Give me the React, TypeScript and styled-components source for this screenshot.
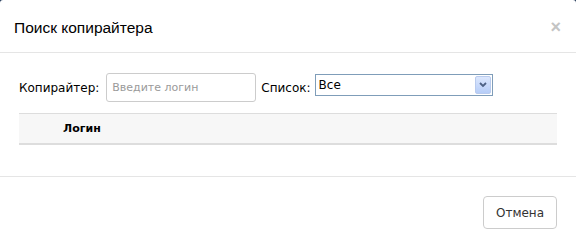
import React from "react";
import styled, { createGlobalStyle } from "styled-components";

const Global = createGlobalStyle`
  html, body { margin: 0; padding: 0; background: #1f3556; }
  body { font-family: "DejaVu Sans", Verdana, sans-serif; }
  * { box-sizing: border-box; }
`;

const Modal = styled.div`
  width: 576px;
  height: 248px;
  background: #fff;
  border-radius: 3px 3px 0 0;
  display: flex;
  flex-direction: column;
  overflow: hidden;
`;

const Header = styled.div`
  height: 53px;
  border-bottom: 1px solid #e5e5e5;
  display: flex;
  align-items: center;
  justify-content: space-between;
  padding: 0 15px 0 14px;
`;

const Title = styled.h4`
  margin: 0;
  font-family: "Liberation Sans", Arial, sans-serif;
  font-size: 15.5px;
  font-weight: normal;
  color: #000;
  line-height: 20px;
  margin-top: 3px;
`;

const Close = styled.span`
  font-family: "Liberation Sans", Arial, sans-serif;
  font-size: 18px;
  font-weight: bold;
  color: #c4c4c4;
  line-height: 1;
  margin-top: 2px;
`;

const Body = styled.div`
  height: 124px;
  border-bottom: 1px solid #e5e5e5;
  padding: 20px 19px 0 19px;
`;

const FilterRow = styled.div`
  display: flex;
  align-items: center;
  height: 29px;
  color: #000;
`;

const Label = styled.label<{ $gap: number }>`
  margin-right: ${(p) => p.$gap}px;
  font-size: 12px;
`;

const Input = styled.input`
  width: 150px;
  height: 29px;
  border: 1px solid #cccccc;
  border-radius: 3px;
  padding: 0 5px;
  font-family: "DejaVu Sans", Verdana, sans-serif;
  font-size: 11px;
  margin-right: 5px;
  &::placeholder { color: #9a9a9a; }
`;

const Select = styled.div`
  width: 178px;
  height: 22px;
  margin-bottom: 5px;
  border: 1px solid #7f9db9;
  display: flex;
  align-items: center;
  justify-content: space-between;
  padding: 1px 1px 1px 3px;
  font-size: 12px;
`;

const Arrow = styled.div`
  width: 16px;
  height: 18px;
  border: 1px solid #b9cbee;
  border-radius: 2px;
  background: linear-gradient(#dce7fd, #b6cdf8);
  display: flex;
  align-items: center;
  justify-content: center;
`;

const Table = styled.div`
  margin-top: 11px;
  height: 32px;
  background: #f7f7f7;
  border-top: 1px solid #dddddd;
  border-bottom: 2px solid #dddddd;
  display: flex;
  align-items: center;
  padding-left: 44px;
`;

const Th = styled.span`
  font-weight: bold;
  font-size: 11px;
  color: #000;
`;

const Footer = styled.div`
  flex: 1;
  display: flex;
  justify-content: flex-end;
  padding: 19px 19px 0 0;
`;

const Button = styled.button`
  width: 74px;
  height: 33px;
  background: #fff;
  border: 1px solid #cccccc;
  border-radius: 4px;
  font-family: "DejaVu Sans", Verdana, sans-serif;
  font-size: 12px;
  color: #333;
`;

export default function App() {
  return (
    <>
      <Global />
      <Modal>
        <Header>
          <Title>Поиск копирайтера</Title>
          <Close>×</Close>
        </Header>
        <Body>
          <FilterRow>
            <Label $gap={7}>Копирайтер:</Label>
            <Input placeholder="Введите логин" />
            <Label $gap={4}>Список:</Label>
            <Select>
              <span>Все</span>
              <Arrow>
                <svg width="8" height="6" viewBox="0 0 8 6">
                  <path d="M1 1 L4 4 L7 1" stroke="#4d6185" strokeWidth="1.8" fill="none" />
                </svg>
              </Arrow>
            </Select>
          </FilterRow>
          <Table>
            <Th>Логин</Th>
          </Table>
        </Body>
        <Footer>
          <Button>Отмена</Button>
        </Footer>
      </Modal>
    </>
  );
}
